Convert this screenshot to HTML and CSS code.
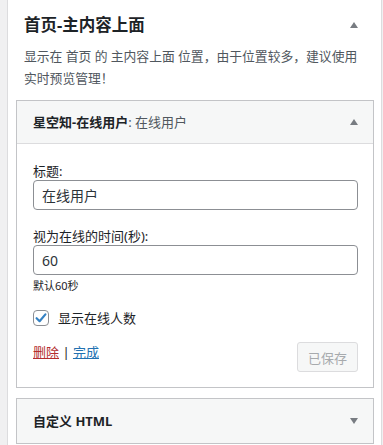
FILE: index.html
```html
<!DOCTYPE html>
<html lang="zh-CN">
<head>
<meta charset="utf-8">
<title>首页-主内容上面</title>
<link rel="stylesheet" href="styles.css">
</head>
<body>
<div class="panel">
  <div class="section-head">
    <h3 class="section-title">首页-主内容上面</h3>
    <span class="tri tri-up"></span>
  </div>
  <p class="desc">显示在 首页 的 主内容上面 位置，由于位置较多，建议使用实时预览管理！</p>

  <div class="widget">
    <div class="widget-top">
      <span class="widget-title"><b>星空知-在线用户</b><span class="sub">: 在线用户</span></span>
      <span class="tri tri-up"></span>
    </div>
    <div class="widget-inside">
      <label class="field-label">标题:</label>
      <input class="text-input" type="text" value="在线用户">
      <label class="field-label second">视为在线的时间(秒):</label>
      <input class="text-input" type="text" value="60">
      <div class="hint">默认60秒</div>
      <div class="check-row">
        <span class="checkbox">
          <svg width="14" height="14" viewBox="0 0 14 14"><path d="M2.6 7.2 L5.6 10.2 L11.4 3.4" fill="none" stroke="#3582c4" stroke-width="2.2" stroke-linecap="round" stroke-linejoin="round"/></svg>
        </span>
        <span class="check-label">显示在线人数</span>
      </div>
      <div class="actions">
        <div class="links"><a class="del" href="#">删除</a><span class="sep"> | </span><a class="done" href="#">完成</a></div>
        <button class="saved" disabled>已保存</button>
      </div>
    </div>
  </div>

  <div class="widget closed">
    <div class="widget-top">
      <span class="widget-title"><b>自定义 HTML</b></span>
      <span class="tri tri-down"></span>
    </div>
  </div>
</div>
</body>
</html>
```

FILE: styles.css
```css
html, body {
  margin: 0;
  padding: 0;
  background: #f0f0f1;
  height: 445px;
  overflow: hidden;
}
body {
  font-family: "Noto Sans", "Noto Sans CJK SC", sans-serif;
  color: #1d2327;
  font-size: 13px;
}
.panel {
  margin-left: 7px;
  width: 375px;
  height: 445px;
  box-sizing: border-box;
  background: #fff;
  border-left: 1px solid #dcdcde;
  border-right: 1px solid #dcdcde;
  padding: 13px 7px 0 8px;
}
.section-head {
  display: flex;
  align-items: center;
  justify-content: space-between;
  padding: 0 16px 0 8px;
  height: 24px;
}
.section-title {
  margin: 0;
  font-size: 16.5px;
  font-weight: 700;
  line-height: 24px;
}
.tri {
  width: 0;
  height: 0;
  border-left: 4.5px solid transparent;
  border-right: 4.5px solid transparent;
}
.tri-up { border-bottom: 6px solid #787c82; }
.tri-down { border-top: 6px solid #787c82; }
.desc {
  margin: 9px 0 0;
  padding: 0 4px 0 8px;
  font-size: 12.8px;
  line-height: 21.5px;
  color: #50575e;
}
.widget {
  margin-top: 11px;
  border: 1px solid #c3c4c7;
  background: #fff;
}
.widget.closed {
  margin-top: 10px;
}
.widget-top {
  height: 42px;
  background: #f6f7f7;
  display: flex;
  align-items: center;
  justify-content: space-between;
  padding: 0 15px 0 16px;
}
.widget .widget-top {
  border-bottom: 1px solid #dcdcde;
}
.widget.closed .widget-top {
  border-bottom: none;
  height: 44px;
}
.widget-title {
  font-size: 13px;
  line-height: 20px;
}
.widget-title b { font-weight: 700; }
.widget-title .sub { color: #50575e; }
.widget-inside {
  padding: 18px 15px 15px 16px;
}
.field-label {
  display: block;
  font-size: 13px;
  line-height: 18px;
}
.field-label.second {
  margin-top: 17px;
}
.text-input {
  display: block;
  width: 100%;
  box-sizing: border-box;
  height: 30px;
  margin: 0;
  padding: 0 8px;
  border: 1px solid #8c8f94;
  border-radius: 4px;
  font-family: "Noto Sans", "Noto Sans CJK SC", sans-serif;
  font-size: 14px;
  color: #2c3338;
  background: #fff;
}
.hint {
  margin-top: 3px;
  font-size: 11px;
  line-height: 16px;
  color: #1d2327;
}
.check-row {
  margin-top: 16px;
  display: flex;
  align-items: center;
  gap: 9px;
  height: 16px;
}
.checkbox {
  width: 14px;
  height: 14px;
  border: 1px solid #8c8f94;
  border-radius: 4px;
  display: flex;
  align-items: center;
  justify-content: center;
}
.check-label {
  font-size: 13px;
  line-height: 18px;
}
.actions {
  margin-top: 16px;
  display: flex;
  justify-content: space-between;
  align-items: flex-start;
}
.links {
  font-size: 13px;
  line-height: 20px;
}
.del { color: #b32d2e; }
.done { color: #2271b1; }
.sep { color: #1d2327; }
.saved {
  width: 61px;
  height: 30px;
  border: 1px solid #dcdcde;
  border-radius: 3px;
  background: #f6f7f7;
  color: #a7aaad;
  font-family: "Noto Sans", "Noto Sans CJK SC", sans-serif;
  font-size: 13px;
  padding: 0;
}
```
